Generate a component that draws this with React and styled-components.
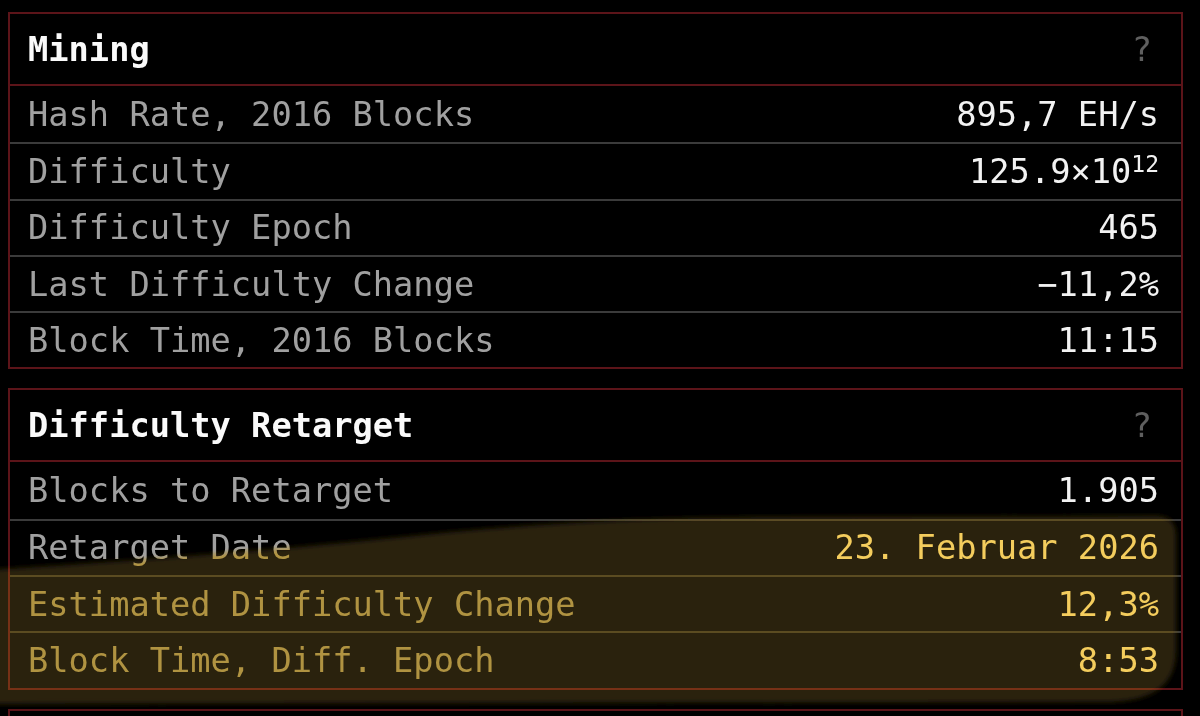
import styled, { createGlobalStyle } from "styled-components";

const GlobalStyle = createGlobalStyle`
  html, body {
    margin: 0;
    background: #000;
  }
  body {
    font-family: "DejaVu Sans Mono", "Liberation Mono", monospace;
  }
`;

const Page = styled.div`
  position: relative;
  height: 716px;
  overflow: hidden;
  background: #000;
  padding: 12px 17px 0 8px;
  box-sizing: border-box;
  display: flex;
  flex-direction: column;
  gap: 19px;
  isolation: isolate;
`;

const Panel = styled.section`
  border: 2px solid #5c1419;
  flex-shrink: 0;
`;

const TitleRow = styled.div`
  height: 70px;
  border-bottom: 2px solid #5c1419;
  display: flex;
  align-items: center;
  justify-content: space-between;
  padding: 0 29px 0 18px;
`;

const Title = styled.h2`
  margin: 0;
  font-size: 33.7px;
  font-weight: bold;
  color: #fafafa;
`;

const Help = styled.span`
  font-size: 33.7px;
  color: #5f5f5f;
`;

const Row = styled.div`
  height: 56.3px;
  box-sizing: border-box;
  display: flex;
  align-items: center;
  justify-content: space-between;
  padding: 0 22px 0 18px;
  font-size: 33.7px;
  & + & {
    border-top: 2px solid #3b3b3b;
  }
`;

const Label = styled.span`
  color: #a0a0a0;
`;

const Value = styled.span`
  color: #f2f2f2;
  white-space: nowrap;
`;

const Sup = styled.sup`
  font-size: 23px;
  line-height: 0;
  vertical-align: 11px;
`;

const Marker = styled.svg`
  position: absolute;
  left: 0;
  top: 0;
  width: 1200px;
  height: 716px;
  pointer-events: none;
  mix-blend-mode: ${(p) => p.$blend};
`;

const markerPath =
  "M -10 570 C 150 560, 300 548, 450 532 C 560 522, 650 518, 760 517 L 1158 516 Q 1176 517 1176 536 L 1176 650 C 1176 688, 1150 700, 1112 702 L -10 704 Z";

const Highlight = ({ id, blend, color }) => (
  <Marker $blend={blend} viewBox="0 0 1200 716">
    <defs>
      <filter id={id} x="-5%" y="-20%" width="110%" height="140%">
        <feGaussianBlur stdDeviation="2.5" />
      </filter>
    </defs>
    <path d={markerPath} fill={color} filter={`url(#${id})`} />
  </Marker>
);

const mining = [
  ["Hash Rate, 2016 Blocks", "895,7 EH/s"],
  [
    "Difficulty",
    <>
      125.9×10<Sup>12</Sup>
    </>,
  ],
  ["Difficulty Epoch", "465"],
  ["Last Difficulty Change", "−11,2%"],
  ["Block Time, 2016 Blocks", "11:15"],
];

const retarget = [
  ["Blocks to Retarget", "1.905"],
  ["Retarget Date", "23. Februar 2026"],
  ["Estimated Difficulty Change", "12,3%"],
  ["Block Time, Diff. Epoch", "8:53"],
];

const StatPanel = ({ title, rows }) => (
  <Panel>
    <TitleRow>
      <Title>{title}</Title>
      {title && <Help>?</Help>}
    </TitleRow>
    {rows &&
      rows.map(([label, value]) => (
        <Row key={label}>
          <Label>{label}</Label>
          <Value>{value}</Value>
        </Row>
      ))}
  </Panel>
);

export default function App() {
  return (
    <>
      <GlobalStyle />
      <Page>
        <StatPanel title="Mining" rows={mining} />
        <StatPanel title="Difficulty Retarget" rows={retarget} />
        <StatPanel title="" />
        <Highlight id="hl-mult" blend="multiply" color="#ffd058" />
        <Highlight id="hl-screen" blend="screen" color="#2a2008" />
      </Page>
    </>
  );
}
